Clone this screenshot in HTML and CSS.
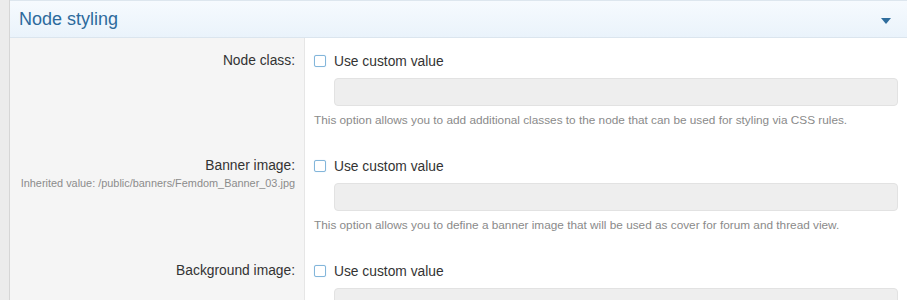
FILE: index.html
```html
<!DOCTYPE html>
<html lang="en">
  <head>
    <meta charset="UTF-8" />
    <title>Node styling</title>
    <link rel="stylesheet" href="styles.css">
  </head>
  <body>
    <div class="panel">
      <div class="panel-head">
        <h3 class="panel-title">Node styling</h3>
        <span class="toggle-arrow"></span>
      </div>

      <div class="option-row">
        <div class="option-label">
          <div class="label-text">Node class:</div>
        </div>
        <div class="option-field">
          <div class="check-line">
            <span class="fake-check"></span>
            <span>Use custom value</span>
          </div>
          <div class="text-input"></div>
          <div class="hint">This option allows you to add additional classes to the node that can be used for styling via CSS rules.</div>
        </div>
      </div>

      <div class="option-row">
        <div class="option-label">
          <div class="label-text">Banner image:</div>
          <div class="inherited">Inherited value: /public/banners/Femdom_Banner_03.jpg</div>
        </div>
        <div class="option-field">
          <div class="check-line">
            <span class="fake-check"></span>
            <span>Use custom value</span>
          </div>
          <div class="text-input"></div>
          <div class="hint">This option allows you to define a banner image that will be used as cover for forum and thread view.</div>
        </div>
      </div>

      <div class="option-row">
        <div class="option-label">
          <div class="label-text">Background image:</div>
        </div>
        <div class="option-field">
          <div class="check-line">
            <span class="fake-check"></span>
            <span>Use custom value</span>
          </div>
          <div class="text-input"></div>
        </div>
      </div>
    </div>
  </body>
</html>
```

FILE: styles.css
```css
body {
  margin: 0;
  padding: 0;
  height: 300px;
  overflow: hidden;
  background-color: #ececec;
  font-family: "Liberation Sans", Arial, sans-serif;
  color: #333;
}

.panel {
  margin-left: 9px;
  border-left: 1px solid #d6d6d6;
  background-color: white;
  height: 300px;
  overflow: hidden;
}

.panel-head {
  display: flex;
  align-items: center;
  justify-content: space-between;
  height: 38px;
  padding: 0 16px 0 9px;
  border-top: 1px solid #dde6ee;
  border-bottom: 1px solid #dbe5ee;
  background: linear-gradient(to bottom, #f6fafe, #eaf3fb);
  box-sizing: border-box;
}

.panel-title {
  margin: 0;
  font-size: 18px;
  font-weight: normal;
  color: #2d6a9c;
}

.toggle-arrow {
  width: 0;
  height: 0;
  margin-top: 3px;
  border-left: 5px solid transparent;
  border-right: 5px solid transparent;
  border-top: 6px solid #2f6d9d;
}

.option-row {
  display: flex;
}

.option-label {
  width: 295px;
  flex-shrink: 0;
  padding: 13px 9px 15px 0;
  box-sizing: border-box;
  background-color: #f5f5f5;
  border-right: 1px solid #e6e6e6;
  text-align: right;
}

.label-text {
  height: 20px;
  line-height: 20px;
  font-size: 13.8px;
  color: #333;
}

.inherited {
  font-size: 10.9px;
  line-height: 14px;
  color: #8c8c8c;
}

.option-field {
  flex: 1;
  padding: 13px 9px 15px 9px;
}

.check-line {
  display: flex;
  align-items: center;
  gap: 8px;
  height: 20px;
  font-size: 13.8px;
  color: #333;
}

.fake-check {
  width: 10px;
  height: 10px;
  border: 1px solid #83b6da;
  border-radius: 2px;
  background-color: white;
  box-shadow: 0 0 1px #b9d8ee;
}

.text-input {
  height: 28px;
  margin: 7px 0 0 20px;
  border: 1px solid #e2e2e2;
  border-radius: 4px;
  background-color: #eeeeee;
  box-sizing: border-box;
}

.hint {
  margin-top: 6px;
  font-size: 11.8px;
  line-height: 16px;
  color: #8a8a8a;
}
```
